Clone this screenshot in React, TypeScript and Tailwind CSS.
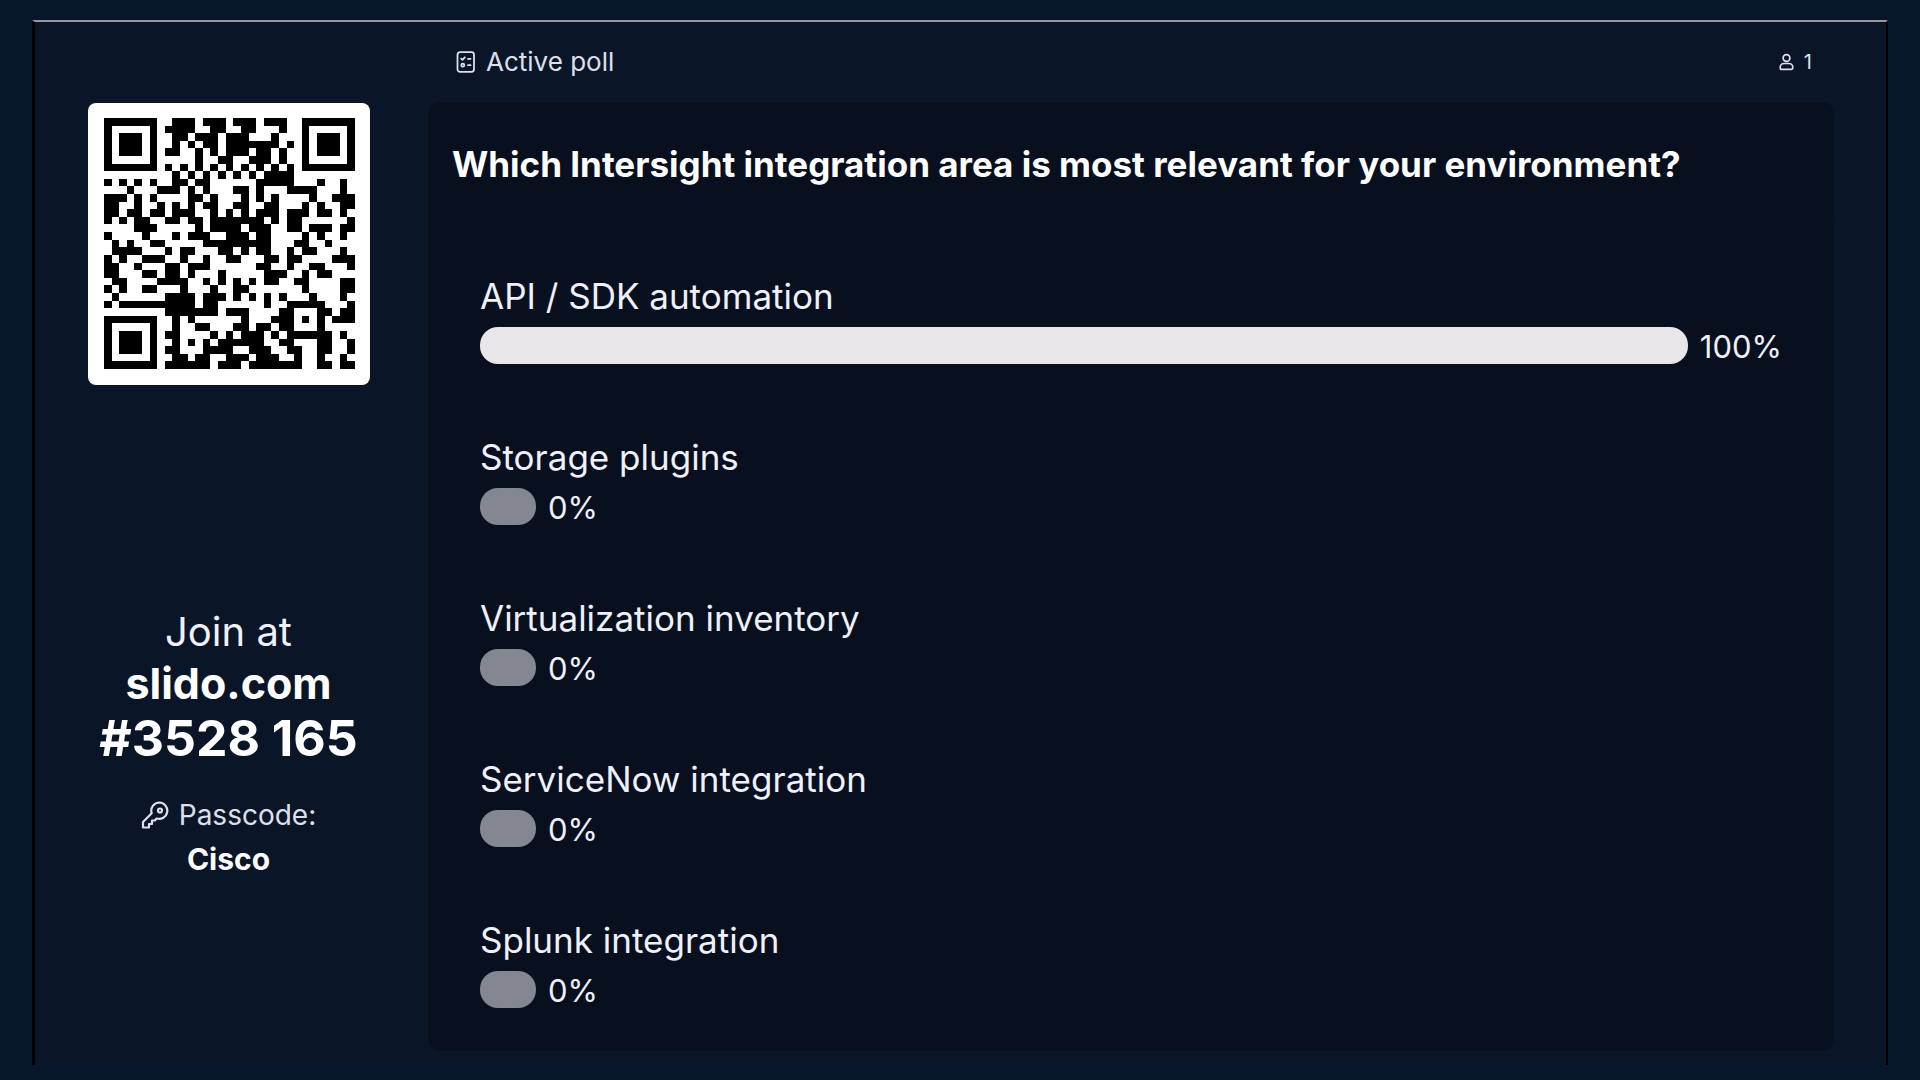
const qrRows = [
    "#######..###.###.###.###..#######",
    "#.....#.####..##..##...#..#.....#",
    "#.###.#..##.###.###...#...#.###.#",
    "#.###.#..#.#.##.#######.#.#.###.#",
    "#.###.#.##..#.#.###.##.#..#.###.#",
    "#.....#.....#..##..###.#..#.....#",
    "#######.#.#.#.#.#.#.#.#.#.#######",
    ".........#.#.#.#.#.#.####........",
    "#.#.#.#..##.##......#####...#..#.",
    "...#...###.#.#...##.#...####...#.",
    "###.#.#....##.#...#.#.#....#..###",
    "##..#..#.#.#.##..##..##...#.#..##",
    "##.##.##.###..#.#.#.###.###.##.#.",
    "#.#.##..##.##.#######.#.##......#",
    "....###.....#.####.###..##.###.##",
    "#....#...#.###..###.##....#.#..#.",
    ".#.#..##.....#########...##..#...",
    ".####...#.##...##.#.##..#.##...#.",
    "#.#..###..#..#..##...##.##....###",
    "##..#...##.###......##..#..##...#",
    "##...##.##.#...#.....###..#.##...",
    ".##....####..#.#.#.#.##..##....##",
    "#.#..##...#...#..##.......#....##",
    ".#......####.###.#.#.#.#...#...#.",
    "#.##########.##......#..#####...#",
    "........#######.###....##...##.##",
    "#######..#.#......#...###.#.#.###",
    "#.....#..#..##...##.##.##...#....",
    "#.###.#.##....#.#.###.#.######.#.",
    "#.###.#..#.#.#.######..##...##..#",
    "#.###.#.##...####..###..##..##..#",
    "#.....#..##.##..###.###..#..#..#.",
    "#######.######.###.#######..##.##",
]

const qrPath = qrRows
    .map((row, y) => [...row].map((cell, x) => (cell === "#" ? `M${x} ${y}h1v1h-1z` : "")).join(""))
    .join("")

const options = [
    { label: "API / SDK automation", percent: 100 },
    { label: "Storage plugins", percent: 0 },
    { label: "Virtualization inventory", percent: 0 },
    { label: "ServiceNow integration", percent: 0 },
    { label: "Splunk integration", percent: 0 },
]

function QrCode () {
    return (
        <div className="rounded-lg bg-white pt-[15px] pr-[15px] pb-4 pl-4">
            <svg className="size-[251px]" viewBox="0 0 33 33" shapeRendering="crispEdges" role="img" aria-label="QR code">
                <path d={qrPath} fill="#000" />
            </svg>
        </div>
    )
}

function PollIcon () {
    return (
        <svg className="h-[22px] w-5" viewBox="0 0 20 22" fill="none" stroke="currentColor" strokeWidth="1.8" strokeLinecap="round" strokeLinejoin="round">
            <rect x="1.5" y="1.2" width="16.5" height="19.6" rx="2.5" />
            <path d="M5.2 7.6l1.300 1.300 2.300-2.600M12 7.800h2.500M12 14.200h2.500" />
            <circle cx="6.800" cy="14.200" r="1.500" />
        </svg>
    )
}

function PersonIcon () {
    return (
        <svg className="h-[18px] w-[15px]" viewBox="0 0 15 18" fill="none" stroke="currentColor" strokeWidth="1.7" strokeLinejoin="round">
            <circle cx="7.5" cy="5" r="3.4" />
            <path d="M5 10.500h5c2 0 3.800 1.700 3.800 4v.6c0 .8-.5 1.300-1.300 1.300h-10c-.8 0-1.300-.5-1.300-1.300v-.6c0-2.300 1.800-4 3.800-4z" />
        </svg>
    )
}

function KeyIcon () {
    return (
        <svg className="size-7" viewBox="0 0 28 28" fill="none" stroke="currentColor" strokeWidth="2.2" strokeLinejoin="round">
            <path d="M18.500 1.500a8.200 8.200 0 0 0-7.800 10.800L2 21v5.500h6V23h3v-3.500h2.800l1.800-2a8.200 8.200 0 1 0 2.900-16z" />
            <circle cx="19" cy="9.500" r="2" />
        </svg>
    )
}

function PollOption ({ label, percent }: { label: string, percent: number }) {
    const barStyles = percent > 0 ? "flex-1 bg-[#e8e6e8]" : "w-14 bg-[#828791]"
    return (
        <li>
            <div className="text-[35px] leading-[44px]">{label}</div>
            <div className="mt-[9px] flex items-center gap-3">
                <div className={`h-[37px] rounded-[18px] ${barStyles}`} />
                <span className="pt-[3px] text-[31px] leading-[34px]">{percent}%</span>
            </div>
        </li>
    )
}

export default function App () {
    return (
        <div className="flex min-h-screen bg-[#06172c] px-8 pt-5 pb-[15px] font-['Inter','Liberation_Sans',sans-serif] text-[#eef0fa]">
            <div className="flex flex-1 border-t-2 border-r-2 border-l-[3px] border-t-[#9b969e] border-r-black border-l-black bg-[#0a1528]">
                <aside className="flex w-[393px] shrink-0 flex-col items-center pt-[81px] pr-1.5">
                    <QrCode />
                    <div className="mt-[222px] text-center">
                        <div className="text-[40px] leading-[50px]">Join at</div>
                        <div className="text-[43px] leading-[52px] font-bold text-white">slido.com</div>
                        <div className="text-[50px] leading-[58px] font-bold text-white">#3528 165</div>
                    </div>
                    <div className="mt-[26px] text-center">
                        <div className="flex items-center justify-center gap-2.5 text-[28px] leading-[44px] text-[#dde0ec]"><KeyIcon />Passcode:</div>
                        <div className="text-[30px] leading-[44px] font-bold text-white">Cisco</div>
                    </div>
                </aside>
                <main className="mr-[52px] mb-[14px] flex flex-1 flex-col">
                    <div className="flex h-20 items-center justify-between pr-[22px] pl-7 text-[#dde0ec]">
                        <div className="flex items-center gap-2.5 text-[26px] leading-[38px]"><PollIcon />Active poll</div>
                        <div className="flex items-center gap-2.5 text-xl"><PersonIcon />1</div>
                    </div>
                    <section className="flex-1 rounded-xl bg-[#080f1e]">
                        <h1 className="border-b border-[#0b1222] px-6 pt-[39px] pb-[33px] text-[35px] leading-[46px] font-bold text-white">
                            Which Intersight integration area is most relevant for your environment?
                        </h1>
                        <ul className="flex flex-col gap-[71px] pt-[53px] pr-[52px] pl-[52px]">
                            {options.map((option) => <PollOption key={option.label} {...option} />)}
                        </ul>
                    </section>
                </main>
            </div>
        </div>
    )
}
